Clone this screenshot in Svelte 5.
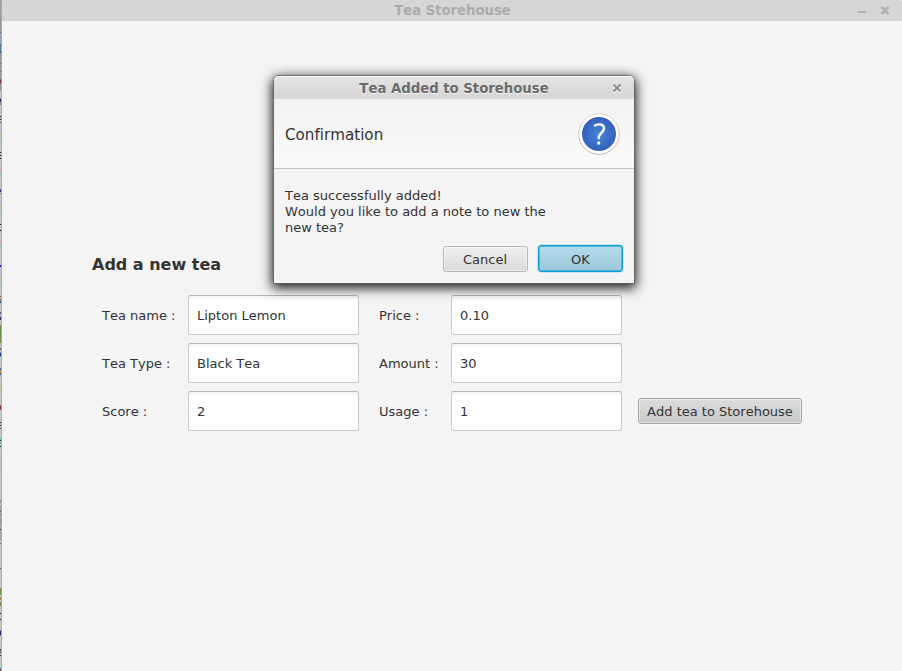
<script>
  const rows = [
    ['Tea name :', 'Lipton Lemon', 'Price :', '0.10'],
    ['Tea Type :', 'Black Tea', 'Amount :', '30'],
    ['Score :', '2', 'Usage :', '1']
  ];
  // [y, height, colour] of the fragments visible beside the window
  const marks = [
    [4, 1, '#7fb0a8'], [13, 19, '#999'], [32, 1, '#4b6280'], [33, 11, '#9aa3b3'], [44, 1, '#3c5068'], [45, 7, '#56789a'], [52, 1, '#1d3146'],
    [53, 38, '#999'], [63, 1, '#666'], [71, 1, '#666'], [79, 1, '#a0522d'], [80, 3, '#70303a'], [83, 1, '#a8663c'],
    [98, 1, '#5ba4d0'], [99, 2, '#2a2470'], [101, 1, '#222'], [103, 1, '#8a6a50'], [104, 1, '#4f8ec4'],
    [116, 1, '#3c5a9a'], [117, 1, '#d39038'], [119, 1, '#222'], [122, 1, '#445'], [134, 2, '#c5c08c'], [138, 2, '#8ec6cc'],
    [152, 1, '#222'], [155, 1, '#222'], [158, 1, '#222'], [170, 2, '#c5c08c'], [174, 2, '#8ec6cc'],
    [189, 1, '#3c6aaa'], [190, 2, '#332470'], [193, 1, '#4b88bb'], [206, 2, '#c5c08c'], [210, 2, '#8ec6cc'],
    [224, 1, '#222'], [230, 1, '#222'], [242, 2, '#c5c08c'], [246, 2, '#8ec6cc'], [265, 2, '#3600f0'], [278, 2, '#c5c08c'], [282, 2, '#8ec6cc'],
    [296, 1, '#7b5132'], [299, 1, '#80553a'], [300, 2, '#4b88bb'], [302, 1, '#333'], [312, 1, '#3c6aaa'], [313, 1, '#70504a'],
    [316, 1, '#5ba4d0'], [317, 3, '#462b7c'], [325, 18, '#6f8d51'], [348, 1, '#3c7ac0'], [349, 1, '#705060'],
    [352, 1, '#5ba4d0'], [353, 3, '#3a2c84'], [356, 1, '#5ba4d0'], [368, 2, '#405f98'], [370, 3, '#c89545'], [373, 2, '#4263a0'],
    [388, 3, '#c5c08c'], [405, 1, '#b86c3e'], [406, 3, '#713433'], [409, 1, '#b86c3e'], [422, 1, '#222'], [425, 1, '#222'], [428, 1, '#5a3328'],
    [438, 2, '#69b9bd'], [440, 1, '#222'], [442, 2, '#69b9bd'], [446, 1, '#222'], [463, 2, '#c9bf69'],
    [500, 1, '#777'], [502, 1, '#777'], [505, 35, '#a5a5a5'], [511, 1, '#555'], [514, 1, '#777'], [521, 1, '#777'], [529, 1, '#222'], [530, 1, '#9bc2d2'],
    [543, 1, '#666'], [568, 1, '#555'], [588, 7, '#6f8d51'], [597, 3, '#a28b45'], [602, 4, '#6f8d51'],
    [613, 1, '#222'], [619, 1, '#222'], [630, 1, '#5ba4d0'], [631, 4, '#332470'], [635, 1, '#5ba4d0'],
    [649, 1, '#333'], [650, 2, '#4b88bb'], [652, 1, '#80553a'], [655, 1, '#333'], [668, 2, '#3c6aaa'], [670, 1, '#a5522d']
  ];
</script>

<div class="desktop">
  <svg class="edge" width="2" height="671" shape-rendering="crispEdges">
    <rect width="1" height="671" fill="#c8c8c8" />
    <rect width="1" height="91" fill="#a0a0a0" />
    {#each marks as [y, h, c]}<rect {y} width="1" height={h} fill={c} />{/each}
    <rect x="1" width="1" height="671" fill="#aaaaaa" />
  </svg>

  <main class="window">
    <header class="titlebar">
      <span>Tea Storehouse</span>
      <svg class="controls" width="40" height="21" viewBox="0 0 40 21">
        <path d="M2 12H10" stroke="#b0b0b0" stroke-width="2" />
        <path d="M25.5 7l7 7M32.5 7l-7 7" stroke="#b0b0b0" stroke-width="2.5" />
      </svg>
    </header>

    <section class="content">
      <h1>Add a new tea</h1>
      <div class="form">
        {#each rows as [a, av, b, bv], i}
          <span class="label">{a}</span>
          <div class="field">{av}</div>
          <span class="label second">{b}</span>
          <div class="field">{bv}</div>
          {#if i === 2}<button class="add">Add tea to Storehouse</button>{:else}<span></span>{/if}
        {/each}
      </div>
    </section>
  </main>

  <div class="dialog">
    <header class="dtitle">
      <span>Tea Added to Storehouse</span>
      <svg class="dclose" width="10" height="10" viewBox="0 0 10 10">
        <path d="M1.5 2.5l7 7M8.5 2.5l-7 7" stroke="#fff" stroke-width="2.3" />
        <path d="M1.5 1.5l7 7M8.5 1.5l-7 7" stroke="#929292" stroke-width="2.3" />
      </svg>
    </header>
    <div class="dhead">
      <span>Confirmation</span>
      <svg width="42" height="42" viewBox="0 0 42 42">
        <defs>
          <radialGradient id="blue"><stop offset="0" stop-color="#4685d8" /><stop offset="1" stop-color="#345fbb" /></radialGradient>
          <linearGradient id="ring" x2="0" y2="1"><stop offset="0" stop-color="#d6d6d6" /><stop offset="1" stop-color="#bcbcbc" /></linearGradient>
        </defs>
        <circle cx="21" cy="21" r="20.3" fill="#fff" stroke="url(#ring)" />
        <circle cx="21" cy="21" r="17" fill="url(#blue)" />
        <path d="M16.2 13C17.9 11.8 19.6 11.4 21.2 11.4C24.4 11.4 26 13 26 15.4C26 19.6 20.7 20 20.7 24.8V26.2" fill="none" stroke="#fff" stroke-width="2.4" />
        <rect x="19.2" y="28.5" width="3" height="3" rx=".6" fill="#fff" />
      </svg>
    </div>
    <div class="dbody">
      <p>Tea successfully added!<br />Would you like to add a note to new the<br />new tea?</p>
      <div class="actions">
        <button>Cancel</button>
        <button class="ok">OK</button>
      </div>
    </div>
  </div>
</div>

<style>
  .desktop {
    position: relative;
    display: flex;
    width: 902px;
    height: 671px;
    overflow: hidden;
    background: #f4f4f4;
    font: 13px/16px "DejaVu Sans", sans-serif;
    font-kerning: none;
    font-variant-ligatures: none;
    color: #333;
  }
  .edge { flex: none; display: block; }
  .window { flex: 1; }
  .titlebar {
    height: 21px;
    box-sizing: border-box;
    display: flex;
    align-items: center;
    background: #d6d6d6;
    border-top-right-radius: 2px;
    color: #ababab;
    font-weight: bold;
    font-size: 13.2px;
  }
  .titlebar span { flex: 1; text-align: center; padding-left: 47px; }
  .controls { margin-right: 6px; }
  .content { padding: 235px 0 0 90px; }
  h1 { margin: 0; font-size: 16px; line-height: 18px; font-weight: bold; }
  .form {
    margin: 21px 0 0 10px;
    display: grid;
    grid-template-columns: 86px 171px 92px 171px auto;
    grid-auto-rows: 40px;
    row-gap: 8px;
    align-items: center;
    justify-content: start;
  }
  .label { padding-top: 2px; }
  .label.second { padding-left: 20px; }
  .field {
    box-sizing: border-box;
    height: 40px;
    padding: 0 8px;
    line-height: 39px;
    border: 1px solid #c9c9c9;
    border-top-color: #b5b5b5;
    border-radius: 3px;
    background: linear-gradient(#f3f3f3, #fff 5px);
  }
  button {
    box-sizing: border-box;
    margin: 0;
    padding: 2px 0 0;
    font: inherit;
    font-kerning: none;
    color: #333;
    border: 1px solid #b4b4b4;
    border-radius: 3px;
    height: 26px;
    background: linear-gradient(#efefef, #dadada);
    box-shadow: inset 0 0 0 1px rgba(255, 255, 255, .55);
  }
  .add {
    width: 164px;
    margin-left: 16px;
    border-color: #a4a4a4;
    background: linear-gradient(#dcdcdc, #cacaca);
    box-shadow: inset 0 0 0 1px rgba(255, 255, 255, .45), 0 1px #fafafa;
  }
  .dialog {
    position: absolute;
    left: 274px;
    top: 76px;
    width: 360px;
    height: 207px;
    display: flex;
    flex-direction: column;
    background: #f4f4f4;
    border-radius: 5px 5px 0 0;
    box-shadow: 0 0 0 1px rgba(90, 95, 92, .65), 0 3px 12px 2px rgba(0, 0, 0, .9);
  }
  .dtitle {
    height: 23px;
    display: flex;
    align-items: center;
    box-sizing: border-box;
    padding: 1px 12px 0 22px;
    background: linear-gradient(#e4e4e4, #d6d6d6);
    border-radius: 5px 5px 0 0;
    box-shadow: inset 0 1px #fff;
    color: #6b6b6b;
    text-shadow: 0 1px #f4f4f4;
    font-weight: bold;
    font-size: 13.25px;
  }
  .dtitle span { flex: 1; text-align: center; padding-top: 1px; }
  .dhead {
    height: 70px;
    box-sizing: border-box;
    padding: 0 14px 0 11px;
    display: flex;
    align-items: center;
    justify-content: space-between;
    border-bottom: 1px solid #c4c4c4;
    background: linear-gradient(#f2f2f2, #fafafa);
    font-size: 15.15px;
  }
  .dhead span { padding-top: 2px; }
  .dbody { flex: 1; padding: 19px 11px 0; }
  p { margin: 0; }
  .actions { display: flex; gap: 10px; justify-content: flex-end; align-items: flex-end; margin-top: 9px; }
  .actions button { width: 85px; padding-right: 1px; }
  .actions .ok {
    width: 85px;
    height: 27px;
    padding-right: 0;
    padding-top: 3px;
    border: 1px solid #039ed3;
    background: linear-gradient(#b5dcec, #9bc6da);
    box-shadow: inset 0 0 0 .5px #039ed3, 0 0 0 1px #c9e8f2;
  }
</style>
